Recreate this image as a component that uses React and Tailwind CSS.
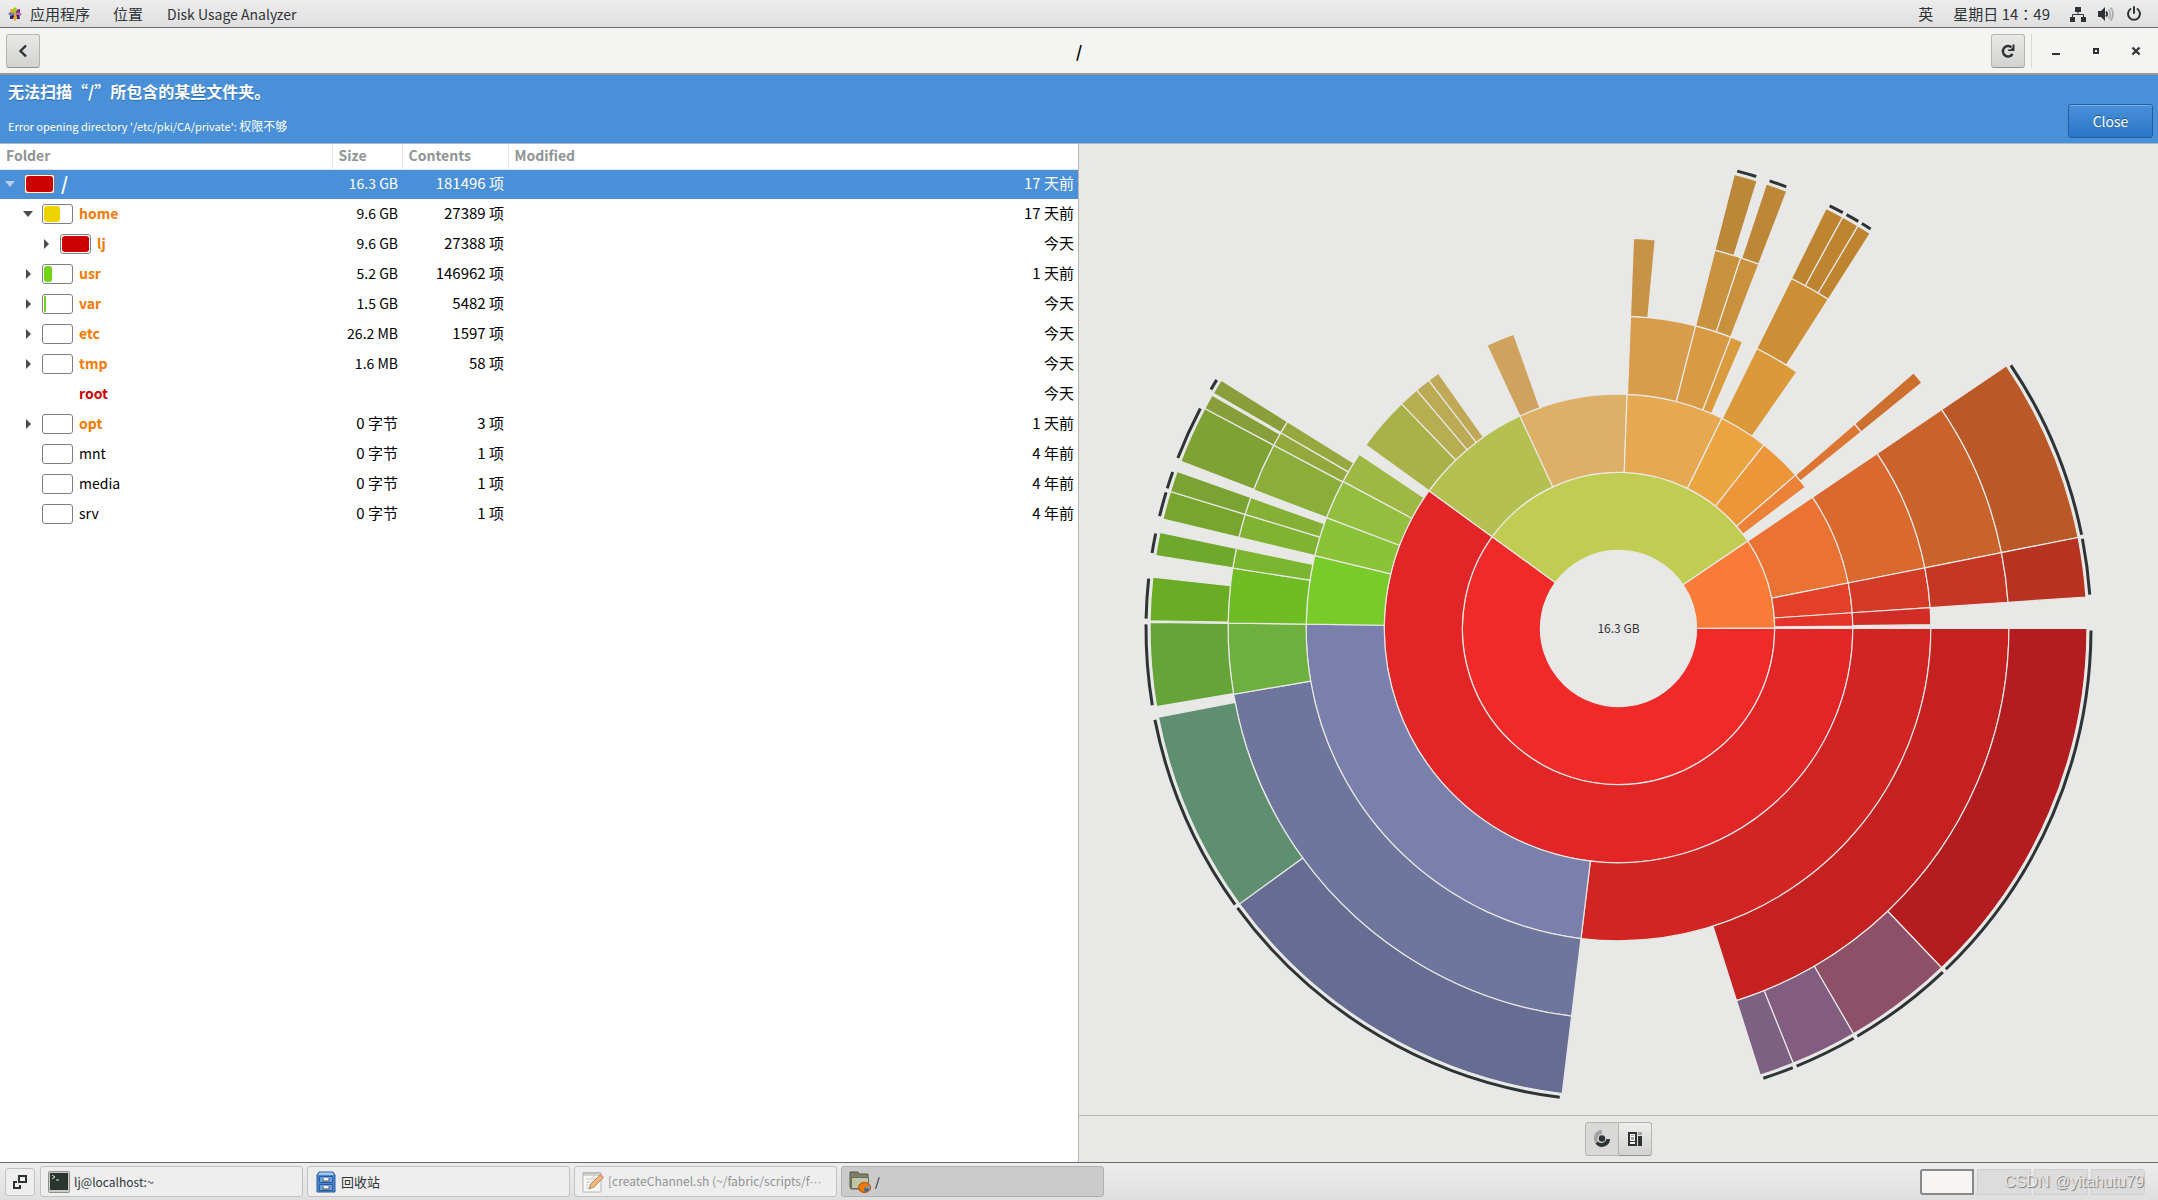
import React from "react";
import clsx from "clsx";

const folders = [
  { name: "/", depth: 0, open: true, fill: 100, bar: "bg-[#cc0000]", size: "16.3 GB", items: "181496 项", modified: "17 天前", selected: true, tone: "text-white text-lg font-bold" },
  { name: "home", depth: 1, open: true, fill: 59, bar: "bg-[#edd400]", size: "9.6 GB", items: "27389 项", modified: "17 天前", tone: "text-[#f57900] font-bold" },
  { name: "lj", depth: 2, open: false, fill: 100, bar: "bg-[#cc0000]", size: "9.6 GB", items: "27388 项", modified: "今天", tone: "text-[#f57900] font-bold" },
  { name: "usr", depth: 1, open: false, fill: 31, bar: "bg-[#73d216]", size: "5.2 GB", items: "146962 项", modified: "1 天前", tone: "text-[#f57900] font-bold" },
  { name: "var", depth: 1, open: false, fill: 9, bar: "bg-[#73d216]", size: "1.5 GB", items: "5482 项", modified: "今天", tone: "text-[#f57900] font-bold" },
  { name: "etc", depth: 1, open: false, fill: 0, size: "26.2 MB", items: "1597 项", modified: "今天", tone: "text-[#f57900] font-bold" },
  { name: "tmp", depth: 1, open: false, fill: 0, size: "1.6 MB", items: "58 项", modified: "今天", tone: "text-[#f57900] font-bold" },
  { name: "root", depth: 1, size: "", items: "", modified: "今天", tone: "text-[#cc0000] font-bold" },
  { name: "opt", depth: 1, open: false, fill: 0, size: "0 字节", items: "3 项", modified: "1 天前", tone: "text-[#f57900] font-bold" },
  { name: "mnt", depth: 1, fill: 0, size: "0 字节", items: "1 项", modified: "4 年前", tone: "text-black" },
  { name: "media", depth: 1, fill: 0, size: "0 字节", items: "1 项", modified: "4 年前", tone: "text-black" },
  { name: "srv", depth: 1, fill: 0, size: "0 字节", items: "1 项", modified: "4 年前", tone: "text-black" },
];

// [ring, start angle, end angle, colour, has deeper children]
// angles are in degrees, clockwise from three o'clock
const sectors = [
  [1, 0, 216, "#f02a28"],
  [1, 216, 325.9, "#c1cc53"],
  [1, 325.9, 359.8, "#f97b37"],

  [2, 0, 216, "#e22526"],
  [2, 216, 245.1, "#b4c04f"],
  [2, 245.1, 272.1, "#deaf66"],
  [2, 272.1, 296.2, "#e6a952"],
  [2, 296.2, 308.4, "#eca440"],
  [2, 308.4, 319.1, "#ed9639"],
  [2, 319.1, 322.9, "#eb8237"],
  [2, 325.9, 348.8, "#ea7334"],
  [2, 348.8, 356.15, "#e44029"],
  [2, 356.15, 359.4, "#e43329"],

  [3, 0, 96.9, "#d22423"],
  [3, 96.9, 180.8, "#7a80ab"],
  [3, 180.8, 193.5, "#79cb29"],
  [3, 193.5, 200.8, "#8ac337"],
  [3, 200.8, 208.1, "#94be3e"],
  [3, 208.1, 213.9, "#9fb843"],
  [3, 216, 226, "#a9b249"],
  [3, 226, 229.75, "#b7ad51"],
  [3, 229.75, 232.6, "#bbab54"],
  [3, 232.6, 234.8, "#bfa957"],
  [3, 245.1, 250.4, "#cfa35d"],
  [3, 272.2, 284.3, "#d79d4d"],
  [3, 284.3, 291.1, "#d89a42"],
  [3, 291.1, 293.4, "#da9b3e"],
  [3, 296.3, 304.8, "#db9939"],
  [3, 319.1, 321, "#dc7632"],
  [3, 325.9, 348.8, "#d9692f"],
  [3, 348.8, 356.15, "#d43b27"],
  [3, 356.15, 359.3, "#d12c25"],

  [4, 0, 72.4, "#c42120"],
  [4, 96.9, 170.3, "#6f769d"],
  [4, 170.3, 180.8, "#6eb03f"],
  [4, 180.8, 188.9, "#70bc25"],
  [4, 188.9, 191.85, "#7cb52f"],
  [4, 193.5, 197, "#80b332"],
  [4, 197, 199.6, "#84b036"],
  [4, 200.8, 208, "#8aae39"],
  [4, 208, 210.1, "#93a93e"],
  [4, 210.1, 212, "#97a840"],
  [4, 272.2, 275.4, "#c79346"],
  [4, 284.3, 288.25, "#c9923f"],
  [4, 288.25, 291.05, "#c9913b"],
  [4, 296.3, 302.5, "#cd8f35"],
  [4, 319.1, 321, "#cd6f2f"],
  [4, 325.9, 348.8, "#c9622b"],
  [4, 348.8, 356.15, "#c63624"],

  [5, 0, 46.4, "#b31d1f", true],
  [5, 46.4, 59.9, "#8e5068", true],
  [5, 59.9, 68.1, "#835d7f", true],
  [5, 68.1, 72.4, "#7d6182", true],
  [5, 96.9, 144, "#676c93", true],
  [5, 144, 169.1, "#5f8e70", true],
  [5, 170.4, 180.75, "#66a339", true],
  [5, 180.95, 186.3, "#6aac24", true],
  [5, 188.95, 191.85, "#6fa82a", true],
  [5, 193.5, 197, "#78a52e", true],
  [5, 197, 199.6, "#7aa333", true],
  [5, 200.9, 208, "#7ea234", true],
  [5, 208, 209.85, "#889e3a"],
  [5, 210.15, 212, "#8a9e3c", true],
  [5, 284.3, 287.2, "#bb8739", true],
  [5, 288.4, 291.05, "#bd8738", true],
  [5, 296.3, 298.6, "#be8531", true],
  [5, 298.6, 300.75, "#be8430", true],
  [5, 300.75, 302.5, "#be8430", true],
  [5, 325.9, 348.8, "#ba5827", true],
  [5, 348.8, 356.15, "#b73221", true],
];

const RING = 78;

function polar(r, deg) {
  const a = (deg * Math.PI) / 180;
  return `${(r * Math.cos(a)).toFixed(2)} ${(r * Math.sin(a)).toFixed(2)}`;
}

function sectorPath(ring, from, to) {
  const inner = ring * RING;
  const outer = inner + RING;
  const large = to - from > 180 ? 1 : 0;
  return `M${polar(inner, from)} L${polar(outer, from)} A${outer} ${outer} 0 ${large} 1 ${polar(outer, to)} L${polar(inner, to)} A${inner} ${inner} 0 ${large} 0 ${polar(inner, from)} Z`;
}

function edgePath(from, to) {
  const r = RING * 6 + 4;
  return `M${polar(r, from + 0.25)} A${r} ${r} 0 0 1 ${polar(r, to - 0.25)}`;
}

function RingsChart() {
  return (
    <svg viewBox="-485 -484 970 970" className="h-full w-full" role="img" aria-label="Rings chart">
      {sectors.map(([ring, from, to, color], i) => (
        <path key={i} d={sectorPath(ring, from, to)} fill={color} stroke="#e8e8e6" strokeWidth="1.2" />
      ))}
      {sectors
        .filter((s) => s[4])
        .map(([, from, to], i) => (
          <path key={i} d={edgePath(from, to)} fill="none" stroke="#2e3436" strokeWidth="3" />
        ))}
      <text x="0" y="4" textAnchor="middle" fontSize="12" fill="#2e3436">
        16.3 GB
      </text>
    </svg>
  );
}

function ActivitiesIcon() {
  return (
    <svg width="14" height="14" viewBox="0 0 14 14">
      <path d="M7 0l2.500 2.500V6L7 7 5 5V2z" fill="#9ccd2a" />
      <path d="M12 2v4L8 7V5l1.500-2.500z" fill="#932279" />
      <path d="M14 7l-2.500 2.500H8.500L7 7l2-1.500h3z" fill="#b86fae" />
      <path d="M12 12H8.500L7.500 8H11z" fill="#262577" />
      <path d="M7 14l-2.500-2.500V8.500L7 7l2 2v3z" fill="#efa724" />
      <path d="M2 12V8.500L6 7.500v2L4.500 12z" fill="#262577" />
      <path d="M0 7l2.500-2.500H5L7 7 5 8.500H2z" fill="#7a79b0" />
      <path d="M2 2h3l1.500 4.500L3 5.500z" fill="#efa724" />
    </svg>
  );
}

function NetworkIcon() {
  return (
    <svg width="16" height="16" viewBox="0 0 16 16" fill="#2e3436">
      <path d="M5 1h6v5H5zM0 11h5v5H0zM11 11h5v5h-5z" />
      <path d="M8 6v3M2.500 11V8.500h11V11" fill="none" stroke="#2e3436" />
    </svg>
  );
}

function VolumeIcon() {
  return (
    <svg width="16" height="16" viewBox="0 0 16 16" fill="none">
      <path d="M0 5h3l4-4v14l-4-4H0z" fill="#2e3436" />
      <path d="M8 5.500c1.300 1.400 1.300 3.600 0 5" stroke="#2e3436" strokeWidth="1.800" />
      <path d="M10.500 3.500c2.300 2.600 2.300 6.400 0 9M12.500 1.500c3.300 3.600 3.300 9.400 0 13" stroke="#a9abac" strokeWidth="1.800" />
    </svg>
  );
}

function PowerIcon() {
  return (
    <svg width="16" height="16" viewBox="0 0 16 16" fill="none" stroke="#2e3436" strokeWidth="2" strokeLinecap="round">
      <path d="M4.500 3A6 6 0 1 0 11.500 3M8 1v6" />
    </svg>
  );
}

function TopBar() {
  return (
    <header className="flex h-7 shrink-0 items-center border-b border-[#686868] bg-linear-to-b from-[#ededed] to-[#dfdfdf] pr-4 pl-2 text-[#2e3436]">
      <button className="flex items-center gap-2 text-[15px]">
        <ActivitiesIcon />
        应用程序
      </button>
      <button className="ml-[23px] text-[15px]">位置</button>
      <button className="ml-6">Disk Usage Analyzer</button>
      <div className="ml-auto flex items-center text-[15px]">
        <button>英</button>
        <button className="ml-5">
          星期日 14<span className="font-['Noto_Sans_CJK_TC']">：</span>49
        </button>
        <button className="ml-5 flex items-center gap-3" aria-label="System">
          <NetworkIcon />
          <VolumeIcon />
          <PowerIcon />
        </button>
      </div>
    </header>
  );
}

function HeaderBar() {
  const toolButton =
    "flex h-[34px] w-[34px] items-center justify-center rounded-[3px] border border-[#b4b4b0] border-b-[#94948f] bg-linear-to-b from-[#e9e9e8] to-[#d2d2d0]";
  return (
    <div className="grid h-[47px] shrink-0 grid-cols-3 items-center border-b-2 border-[#999893] bg-[#f4f4f3] px-1.5">
      <button className={toolButton} aria-label="Back">
        <svg width="16" height="16" viewBox="0 0 16 16" fill="none" stroke="#2e3436" strokeWidth="2.400">
          <path d="M11 2.500L5.500 8l5.500 5.500" />
        </svg>
      </button>
      <h1 className="text-center text-base font-bold text-black">/</h1>
      <div className="flex items-center justify-end">
        <button className={toolButton} aria-label="Rescan">
          <svg width="16" height="16" viewBox="0 0 16 16" fill="none">
            <path d="M12.500 11A5.200 5.200 0 1 1 11.500 4.300" stroke="#2e3436" strokeWidth="2.400" />
            <path d="M14.500 1.500v6.500H8V6.500h2.500l2-2v-3z" fill="#2e3436" />
          </svg>
        </button>
        <span className="mr-4 ml-1.5 h-[34px] w-px bg-[#d8d8d6]" />
        <div className="flex gap-6 pr-2">
          <button aria-label="Minimize">
            <svg width="16" height="16" viewBox="0 0 16 16">
              <path d="M4 10h8v2H4z" fill="#2e3436" />
            </svg>
          </button>
          <button aria-label="Maximize">
            <svg width="16" height="16" viewBox="0 0 16 16">
              <path d="M6 6h4v4H6z" fill="none" stroke="#2e3436" strokeWidth="2" />
            </svg>
          </button>
          <button aria-label="Close window">
            <svg width="16" height="16" viewBox="0 0 16 16">
              <path d="M4.500 4.500l7 7M11.500 4.500l-7 7" stroke="#2e3436" strokeWidth="2.200" />
            </svg>
          </button>
        </div>
      </div>
    </div>
  );
}

function InfoBar() {
  return (
    <div className="flex h-[69px] shrink-0 items-end justify-between border-b border-[#a5b8cc] bg-[#4a90d9] pr-[5px] pb-[5px] pl-2 text-white">
      <div className="pb-0.5">
        <p className="text-base leading-5 font-bold [text-shadow:0_1px_#2c6cb0]">无法扫描“/”所包含的某些文件夹。</p>
        <p className="mt-[15px] text-[11px] leading-5">
          Error opening directory '/etc/pki/CA/private': <span className="text-xs leading-5">权限不够</span>
        </p>
      </div>
      <button className="h-[34px] w-[85px] rounded-[3px] border border-[#1f5f9f] bg-linear-to-b from-[#4a90d9] to-[#2a76c6] shadow-[inset_0_1px_#80b1e4] [text-shadow:0_-1px_#1c5287]">
        Close
      </button>
    </div>
  );
}

function Expander({ open, selected }) {
  return (
    <button className="flex h-5 w-3 items-center justify-center" aria-label={open ? "Collapse" : "Expand"}>
      <svg width="10" height="10" viewBox="0 0 10 10" fill={selected ? "#b5d0ef" : "#4d4d4d"}>
        <path d={open ? "M0 2h10L5 8z" : "M3 0v10l5-5z"} />
      </svg>
    </button>
  );
}

const indents = ["pl-1", "pl-[22px]", "pl-10"];

function FolderRow({ folder }) {
  return (
    <tr className={clsx("h-[30px]", folder.selected ? "bg-[#4a90d9] text-white" : "text-black")}>
      <td>
        <div className={clsx("flex items-center", indents[folder.depth])}>
          {folder.open === undefined ? <span className="w-3" /> : <Expander open={folder.open} selected={folder.selected} />}
          <span
            className={clsx(
              "mr-1.5 ml-2 h-5 w-[31px] rounded-[3px] p-px",
              folder.fill !== undefined && "border border-[#7f7f7f] bg-white"
            )}>
            {folder.fill > 0 && (
              <span className={clsx("block h-full rounded-[3px]", folder.bar)} style={{ width: `${folder.fill}%` }} />
            )}
          </span>
          <span className={clsx("pb-0.5 leading-5", folder.tone)}>{folder.name}</span>
        </div>
      </td>
      <td className={clsx("pr-1 pb-0.5 text-right", folder.size.includes("字节") && "text-[15px]")}>{folder.size}</td>
      <td className="pr-1 pb-0.5 text-right text-[15px]">{folder.items}</td>
      <td className="pr-1 pb-0.5 text-right text-[15px]">{folder.modified}</td>
    </tr>
  );
}

function FolderTable() {
  return (
    <div className="w-1/2 border-r border-[#b6b6b3] bg-white">
      <table className="w-full table-fixed">
        <colgroup>
          <col className="w-[332px]" />
          <col className="w-[70px]" />
          <col className="w-[106px]" />
          <col />
        </colgroup>
        <thead>
          <tr className="h-[25px] border-b border-[#e6e6e4] text-left text-[#8f9494]">
            <th className="border-r border-[#e6e6e4] pb-0.5 pl-1.5">Folder</th>
            <th className="border-r border-[#e6e6e4] pb-0.5 pl-1.5">Size</th>
            <th className="border-r border-[#e6e6e4] pb-0.5 pl-1.5">Contents</th>
            <th className="pb-0.5 pl-1.5">Modified</th>
          </tr>
        </thead>
        <tbody>
          {folders.map((folder) => (
            <FolderRow key={folder.name} folder={folder} />
          ))}
        </tbody>
      </table>
    </div>
  );
}

function ChartPane() {
  return (
    <div className="flex min-h-0 w-1/2 flex-col bg-[#e8e8e6]">
      <div className="min-h-0 flex-1">
        <RingsChart />
      </div>
      <div className="flex h-[47px] shrink-0 items-center justify-center border-t border-[#b6b6b3]">
        <button className="flex h-[34px] w-[34px] items-center justify-center rounded-l-[3px] border border-[#b4b4b0] bg-[#d9d9d7]" aria-label="Rings chart view">
          <svg width="16" height="18" viewBox="0 0 16 18">
            <path d="M8 0v4a5 5 0 0 0-4 7l-2.500 2A8 8 0 0 1 8 0z" fill="#a3a5a5" />
            <path d="M1.500 13.500L4 11.500A5 5 0 0 0 12.500 9H16A8 8 0 0 1 1.500 13.500z" fill="#2e3436" />
            <circle cx="8" cy="8.500" r="3.200" fill="#2e3436" />
          </svg>
        </button>
        <button className="flex h-[34px] w-[33px] items-center justify-center rounded-r-[3px] border border-l-0 border-[#b4b4b0] border-b-[#94948f] bg-linear-to-b from-[#ededec] to-[#d2d2d0]" aria-label="Treemap chart view">
          <svg width="16" height="16" viewBox="0 0 16 16">
            <path d="M1 1h9v14H1z" fill="#2e3436" />
            <path d="M3 3h5v7H3zM3 11h5v2H3z" fill="#f4f4f3" />
            <path d="M4 4h3v1H4zM4 6h3v3H4z" fill="#a3a5a5" />
            <path d="M11 1h4v3h-4z" fill="#a3a5a5" />
            <path d="M11 5h4v10h-4z" fill="#2e3436" />
          </svg>
        </button>
      </div>
    </div>
  );
}

function TerminalIcon() {
  return (
    <svg width="22" height="22" viewBox="0 0 22 22">
      <rect x="0.5" y="0.5" width="21" height="21" rx="1" fill="#c9cbc6" stroke="#8e908c" />
      <rect x="2" y="2" width="18" height="17" fill="#2b352f" />
      <path d="M4 4l3 2-3 2M8 9h3" stroke="#dfe5df" fill="none" />
    </svg>
  );
}

function CabinetIcon() {
  return (
    <svg width="22" height="22" viewBox="0 0 22 22">
      <path d="M4 1h14l2 3v17H2V4z" fill="#4a86cf" stroke="#2a5a9c" />
      <path d="M4.500 1.500h13L19 4H3z" fill="#a6c6ec" />
      <path d="M4.500 5.500h13v6h-13zM4.500 13.500h13v6h-13z" fill="#6ea2e0" stroke="#2a5a9c" />
      <path d="M8 7v3h6V7M8 15v3h6v-3" fill="#fff" stroke="#555" />
    </svg>
  );
}

function NotesIcon() {
  return (
    <svg width="22" height="22" viewBox="0 0 22 22">
      <path d="M1 2h18v19H1z" fill="#f7f7f5" stroke="#b5b5b2" />
      <path d="M2 1v4M4 1v4M6 1v4M8 1v4M10 1v4M12 1v4M14 1v4M16 1v4M18 1v4" stroke="#aaa" />
      <path d="M4 8h11M4 11h8M4 14h6M4 17h5" stroke="#c9c9c6" />
      <path d="M7 18l2-5L18 4l3 3-9 9z" fill="#f1b77c" stroke="#b8895a" />
      <path d="M18 4l1-1 3 3-1 1z" fill="#ef8d8d" />
    </svg>
  );
}

function UsageIcon() {
  return (
    <svg width="22" height="22" viewBox="0 0 22 22">
      <path d="M1 1h8l1 2h9v15H2L1 16z" fill="#7d8068" stroke="#55584a" />
      <path d="M2.500 6.500h17v11h-17z" fill="#c0c4aa" stroke="#6a6d58" />
      <ellipse cx="15.500" cy="16.500" rx="6" ry="5" fill="#f57900" stroke="#a84b00" />
      <path d="M15.500 16.500V21c2 0 4-1 5-3z" fill="#3465a4" />
      <path d="M15.500 16.500l5 1.500c.7-1.500.5-2.500 0-3.500z" fill="#729fcf" />
    </svg>
  );
}

const tasks = [
  { title: "lj@localhost:~", icon: <TerminalIcon /> },
  { title: "回收站", icon: <CabinetIcon />, cjk: true },
  { title: "[createChannel.sh (~/fabric/scripts/f", icon: <NotesIcon />, minimized: true, clipped: true },
  { title: "/", icon: <UsageIcon />, active: true },
];

function TaskBar() {
  return (
    <footer className="relative flex h-[38px] shrink-0 items-center border-t border-[#686868] bg-linear-to-b from-[#ededed] to-[#dfdfdf] pr-[13px] pl-[5px] text-[#2e3436]">
      <button className="mr-[5px] flex h-7 w-[30px] items-center justify-center rounded-[3px] border border-[#c2c2c2] bg-[#eeeeee]" aria-label="Show desktop">
        <svg width="16" height="16" viewBox="0 0 16 16" fill="none" stroke="#2e3436" strokeWidth="2">
          <path d="M7 2h7v6H7zM5 8H2v6h6v-3" />
        </svg>
      </button>
      <div className="flex gap-1">
        {tasks.map((task) => (
          <button
            key={task.title}
            className={clsx(
              "flex h-[31px] w-[263px] items-center gap-1 rounded-[3px] border px-[7px] whitespace-nowrap",
              task.active ? "border-[#b0b0b0] bg-[#cbcbcb] text-black" : "border-[#c2c2c2] bg-[#eeeeee]",
              task.minimized && "text-[#8f9393]"
            )}>
            <span className="shrink-0">{task.icon}</span>
            <span className={task.cjk ? "text-[13px]" : "text-xs"}>
              {task.title}
              {task.clipped && <span className="font-['Liberation_Sans']">···</span>}
            </span>
          </button>
        ))}
      </div>
      <div className="ml-auto flex gap-[3px]">
        <button className="h-[26px] w-[54px] rounded-l-[3px] border-2 border-[#888888] bg-[#f6f5f4]" aria-label="Workspace 1" />
        <button className="h-[26px] w-[54px] border border-[#cfcfcf] bg-[#dcdcdc]" aria-label="Workspace 2" />
        <button className="h-[26px] w-[54px] border border-[#cfcfcf] bg-[#dcdcdc]" aria-label="Workspace 3" />
        <button className="h-[26px] w-[54px] rounded-r-[3px] border border-[#cfcfcf] bg-[#dcdcdc]" aria-label="Workspace 4" />
      </div>
      <span className="absolute right-3.5 bottom-1.5 font-['Liberation_Sans'] text-base text-[#e6e6e6] [text-shadow:1px_1px_1px_#777777]">
        CSDN @yitahutu79
      </span>
    </footer>
  );
}

export default function App() {
  return (
    <div className="flex h-screen flex-col bg-white font-['Noto_Sans_CJK_SC',sans-serif] text-sm leading-5">
      <TopBar />
      <HeaderBar />
      <InfoBar />
      <main className="flex min-h-0 flex-1">
        <FolderTable />
        <ChartPane />
      </main>
      <TaskBar />
    </div>
  );
}
